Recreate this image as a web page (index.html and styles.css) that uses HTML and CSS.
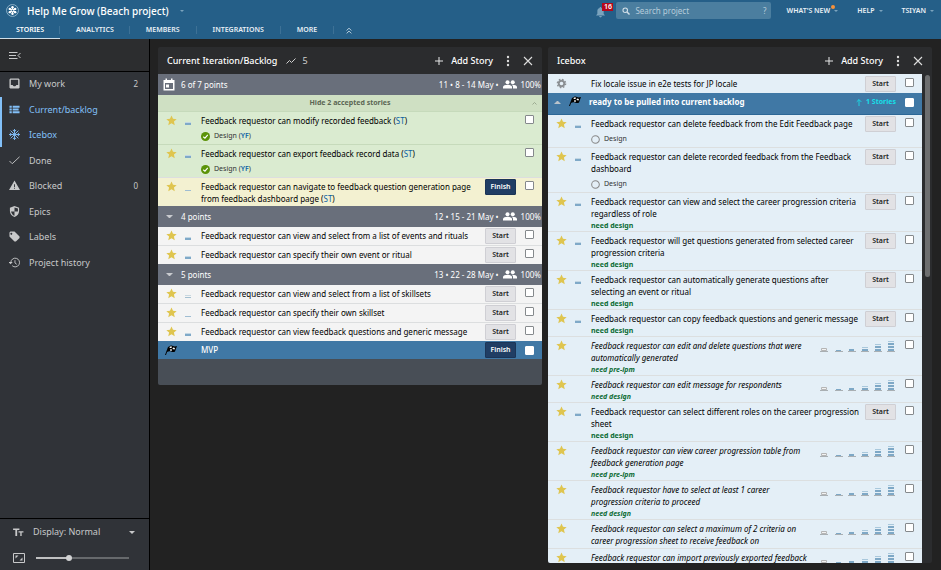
FILE: index.html
```
<!DOCTYPE html>
<html lang="en">
<head>
<meta charset="utf-8">
<title>Help Me Grow (Beach project)</title>
<link rel="stylesheet" href="styles.css">
</head>
<body>
<svg class="defs" aria-hidden="true">
  <symbol id="star" viewBox="0 0 24 24"><path d="M12 1l3.300 7.300 8 .8-6 5.300 1.800 7.900L12 18.200 4.900 22.300l1.800-7.900-6-5.300 8-.8z"/></symbol>
  <symbol id="est1" viewBox="0 0 6 10"><path fill="#c3d7e4" d="M0 6h6v1H0z"/><path fill="#7fa9c8" d="M0 7h6v2H0z"/></symbol>
  <symbol id="est0" viewBox="0 0 6 10"><path fill="#9fbdd2" d="M0 8h6v1H0z"/></symbol>
  <symbol id="est2" viewBox="0 0 6 10"><path fill="#c9d8e0" d="M0 6h6v1H0z"/><path fill="#a3bfd0" d="M0 8h6v1H0z"/></symbol>
  <symbol id="scale" viewBox="0 0 76 13">
    <path fill="#a9afb3" d="M0 11h8v1H0zM15 11h8v1h-8zM28 11h8v1h-8zM41 11h8v1h-8zM54 11h8v1h-8zM67 11h8v1h-8z"/>
    <path fill="#f2f2f2" stroke="#b5b5b5" d="M1.500 8.500h5v2h-5z"/>
    <path fill="#7ea8c6" d="M16 10h5v1h-5zM29 9h5v2h-5zM42 9h6v2h-6zM55 9h6v2h-6zM55 6h6v2h-6zM68 9h6v2h-6zM68 6h6v2h-6zM68 3h6v2h-6z"/>
    <path fill="#a9c8dc" d="M42 7h6v1h-6zM55 4h6v1h-6zM68 1h6v1h-6z"/>
  </symbol>
  <symbol id="flag" viewBox="0 0 24 20"><path fill="#000" d="M0 20L6 4l2-1-6 17zM6 5c4-5 8-5 10-3 2 1 5 1 8 0l-4 11c-2 2-6 1-8 0s-5-1-8 1z"/><path fill="#fff" d="M10 3h4l-1 3H9zM16 5l4 1-1 3-4-1zM11 8l3 1-1 3-3-1z"/></symbol>
  <symbol id="gear" viewBox="0 0 24 24"><circle cx="12" cy="12" r="6" fill="none" stroke="#8b8f93" stroke-width="4"/><circle cx="12" cy="12" r="9" fill="none" stroke="#8b8f93" stroke-width="3" stroke-dasharray="3.500 3.570"/></symbol>
  <symbol id="people" viewBox="0 0 28 18"><g fill="#fff"><circle cx="9" cy="4.500" r="4"/><circle cx="19.500" cy="4.500" r="4"/><path d="M0 17v-3c0-3 5-4.500 9-4.500s9 1.500 9 4.500v3zM20 17v-3c0-2-1-3.200-2.500-4.300 4-.6 10.500 1 10.500 4.300v3z"/></g></symbol>
  <symbol id="plus" viewBox="0 0 10 10"><path fill="none" stroke="#e8e8e8" d="M5 1v8M1 5h8"/></symbol>
  <symbol id="dots" viewBox="0 0 4 12"><g fill="#ddd"><circle cx="2" cy="2" r="1.200"/><circle cx="2" cy="6" r="1.200"/><circle cx="2" cy="10" r="1.200"/></g></symbol>
  <symbol id="close" viewBox="0 0 10 10"><path fill="none" stroke="#ddd" stroke-width="1.100" d="M1 1l8 8M9 1l-8 8"/></symbol>
  <symbol id="done" viewBox="0 0 16 16"><circle cx="8" cy="8" r="8" fill="#5b9308"/><path fill="none" stroke="#fff" stroke-width="2" d="M4 8.500l3 2.500 5-6"/></symbol>
  <symbol id="todo" viewBox="0 0 16 16"><circle cx="8" cy="8" r="6.800" fill="none" stroke="#888" stroke-width="1.800"/></symbol>
</svg>

<header class="topbar">
  <div class="brand">
    <svg class="logo" viewBox="0 0 24 24"><circle cx="12" cy="12" r="11" fill="none" stroke="#9fc0d4" stroke-width="1.500"/><g stroke="#fff" stroke-width="2.600" fill="none"><path d="M12 5v14M6 8.500l12 7M18 8.500l-12 7"/></g><g fill="#fff"><circle cx="12" cy="6" r="2.200"/><circle cx="12" cy="18" r="2.200"/><circle cx="7" cy="9" r="2.200"/><circle cx="17" cy="9" r="2.200"/><circle cx="7" cy="15" r="2.200"/><circle cx="17" cy="15" r="2.200"/></g><circle cx="12" cy="12" r="1.500" fill="#255f88"/></svg>
    <h1>Help Me Grow (Beach project)</h1>
    <span class="caret"></span>
  </div>
  <div class="tools">
    <button class="bell" aria-label="Notifications"><svg viewBox="0 0 20 24"><path fill="#7ba3bd" d="M10 1c1 0 2 1 2 2 4 1 5 4 5 8v5l3 4H0l3-4v-5c0-4 1-7 5-8 0-1 1-2 2-2zM7 21h6c0 4-6 4-6 0z"/></svg><span class="count">16</span></button>
    <label class="search"><svg viewBox="0 0 16 16"><circle cx="6.500" cy="6.500" r="4.500" fill="none" stroke="#d3e0e9" stroke-width="2.200"/><path stroke="#d3e0e9" stroke-width="2.800" d="M10 10l5 5"/></svg><input type="text" placeholder="Search project" aria-label="Search project"><span>?</span></label>
    <a class="menu new" href="#">WHAT'S NEW<i class="dot"></i><span class="caret"></span></a>
    <a class="menu help" href="#">HELP<span class="caret"></span></a>
    <a class="menu" href="#">TSIYAN<span class="caret"></span></a>
  </div>
  <nav class="tabs">
    <a class="on" href="#">STORIES</a><a href="#">ANALYTICS</a><a href="#">MEMBERS</a><a href="#">INTEGRATIONS</a><a href="#">MORE</a>
    <button aria-label="Collapse header"><svg viewBox="0 0 10 12"><path fill="none" stroke="#c5d7e3" stroke-width="1.600" d="M1 6l4-4 4 4M1 11l4-4 4 4"/></svg></button>
  </nav>
</header>

<div class="app">
<aside class="sidebar">
  <div class="fold"><button aria-label="Collapse sidebar"><svg viewBox="0 0 24 16"><path fill="none" stroke="#c8c9ca" stroke-width="2" d="M0 2h17M0 8h14M0 14h17M23 3l-5 5 5 5"/></svg></button></div>
  <ul class="nav">
    <li><a href="#"><svg viewBox="0 0 24 24"><path fill="#c8c9ca" fill-rule="evenodd" d="M3 1h18l2 2v18l-2 2H3l-2-2V3zM4 4v11h4c1 4 7 4 8 0h4V4z"/></svg>My work<span>2</span></a></li>
    <li class="on"><a href="#"><svg viewBox="0 0 24 24"><path fill="#82c0f8" d="M1 4h5v4H1zM8 4h15v4H8zM1 10h5v4H1zM8 10h13v4H8zM1 16h5v4H1zM8 16h15v4H8z"/></svg>Current/backlog</a></li>
    <li class="on"><a href="#"><svg viewBox="0 0 24 24"><path fill="none" stroke="#82c0f8" stroke-width="2" d="M12 0v24M0 12h24M3.500 3.500l17 17M20.500 3.500l-17 17M8.500 2l3.500 4 3.500-4M8.500 22l3.500-4 3.500 4M2 8.500l4 3.500-4 3.500M22 8.500l-4 3.500 4 3.500"/></svg>Icebox</a></li>
    <li><a href="#"><svg viewBox="0 0 24 24"><path fill="none" stroke="#c8c9ca" stroke-width="2" d="M1 13l6 6L23 4"/></svg>Done</a></li>
    <li><a href="#"><svg viewBox="0 0 24 24"><path fill="#c8c9ca" fill-rule="evenodd" d="M12 1l12 21H0zM11 9v6h2V9zM11 17v2h2v-2z"/></svg>Blocked<span>0</span></a></li>
    <li><a href="#"><svg viewBox="0 0 24 24"><path fill="#c8c9ca" fill-rule="evenodd" d="M12 0l10 4v7c0 6-4 11-10 13C6 22 2 17 2 11V4zM12 3v9H4.500c.5 4 3.500 8 7.500 9.500V12h7.500V5.500z"/></svg>Epics</a></li>
    <li><a href="#"><svg viewBox="0 0 24 24"><path fill="#c8c9ca" fill-rule="evenodd" d="M1 3l2-2h9l11 11v3l-8 8h-3L1 12zM5 4a2 2 0 1 0 .1 0z"/></svg>Labels</a></li>
    <li><a href="#"><svg viewBox="0 0 24 24"><path fill="none" stroke="#c8c9ca" stroke-width="2" d="M4 12a9.500 9.500 0 1 1 3 7M13 7v6l4 3"/><path fill="#c8c9ca" d="M-1 11h9l-4.500 5z"/></svg>Project history</a></li>
  </ul>
  <div class="display">
    <button class="density"><svg viewBox="0 0 24 20"><path fill="#c8c9ca" d="M0 1h14v3.500H9V18H5V4.500H0zM12 7h11v3h-4v8h-3v-8h-4z"/></svg>Display: Normal<span class="caret"></span></button>
    <div class="zoom"><svg viewBox="0 0 24 20"><path fill="none" stroke="#c8c9ca" stroke-width="2" d="M1 1h22v18H1z"/><path fill="#c8c9ca" d="M5 5h6l-6 6zM19 15h-6l6-6z"/></svg><input type="range" min="0" max="100" value="34" aria-label="Story size"></div>
  </div>
</aside>

<main class="panels">
<section class="panel backlog">
  <header class="head"><h2>Current Iteration/Backlog</h2><span class="velocity"><svg viewBox="0 0 20 12"><path fill="none" stroke="#d0d0d0" stroke-width="2" d="M1 11l6-6 4 4 8-8"/></svg>5</span>
    <button class="add"><svg><use href="#plus"/></svg>Add Story</button><button class="more" aria-label="Panel menu"><svg><use href="#dots"/></svg></button><button class="close" aria-label="Close panel"><svg><use href="#close"/></svg></button></header>
  <div class="band"><svg class="cal" viewBox="0 0 24 24"><path fill="#fff" fill-rule="evenodd" d="M1 3h4V0h3v3h8V0h3v3h4v21H1zM4 9v12h16V9zM6 12h6v6H6z"/></svg><b>6 of 7 points</b><span>11 • 8 - 14 May •</span><svg class="people"><use href="#people"/></svg><span>100%</span></div>
  <button class="accepted"><span>Hide 2 accepted stories</span><svg viewBox="0 0 10 6"><path fill="none" stroke="#8b9a80" stroke-width="1.500" d="M1 5l4-4 4 4"/></svg></button>
  <article class="row green first"><svg class="star"><use href="#star"/></svg><svg class="est"><use href="#est1"/></svg><div class="text"><p>Feedback requestor can modify recorded feedback (<a href="#">ST</a>)</p><div class="review"><svg><use href="#done"/></svg>Design (<b>YF</b>)</div></div><input type="checkbox" aria-label="Select story"></article>
  <article class="row green"><svg class="star"><use href="#star"/></svg><svg class="est"><use href="#est1"/></svg><div class="text"><p>Feedback requestor can export feedback record data (<a href="#">ST</a>)</p><div class="review"><svg><use href="#done"/></svg>Design (<b>YF</b>)</div></div><input type="checkbox" aria-label="Select story"></article>
  <article class="row yellow"><svg class="star"><use href="#star"/></svg><svg class="est"><use href="#est0"/></svg><div class="text"><p>Feedback requestor can navigate to feedback question generation page from feedback dashboard page (<a href="#">ST</a>)</p></div><button class="act finish">Finish</button><input type="checkbox" aria-label="Select story"></article>
  <div class="band"><i class="tri"></i><b>4 points</b><span>12 • 15 - 21 May •</span><svg class="people"><use href="#people"/></svg><span>100%</span></div>
  <article class="row"><svg class="star"><use href="#star"/></svg><svg class="est"><use href="#est1"/></svg><div class="text"><p>Feedback requestor can view and select from a list of events and rituals</p></div><button class="act">Start</button><input type="checkbox" aria-label="Select story"></article>
  <article class="row"><svg class="star"><use href="#star"/></svg><svg class="est"><use href="#est1"/></svg><div class="text"><p>Feedback requestor can specify their own event or ritual</p></div><button class="act">Start</button><input type="checkbox" aria-label="Select story"></article>
  <div class="band"><i class="tri"></i><b>5 points</b><span>13 • 22 - 28 May •</span><svg class="people"><use href="#people"/></svg><span>100%</span></div>
  <article class="row"><svg class="star"><use href="#star"/></svg><svg class="est"><use href="#est2"/></svg><div class="text"><p>Feedback requestor can view and select from a list of skillsets</p></div><button class="act">Start</button><input type="checkbox" aria-label="Select story"></article>
  <article class="row"><svg class="star"><use href="#star"/></svg><svg class="est"><use href="#est0"/></svg><div class="text"><p>Feedback requestor can specify their own skillset</p></div><button class="act">Start</button><input type="checkbox" aria-label="Select story"></article>
  <article class="row"><svg class="star"><use href="#star"/></svg><svg class="est"><use href="#est1"/></svg><div class="text"><p>Feedback requestor can view feedback questions and generic message</p></div><button class="act">Start</button><input type="checkbox" aria-label="Select story"></article>
  <article class="release mvp"><svg class="flag"><use href="#flag"/></svg><p>MVP</p><button class="act finish">Finish</button><input type="checkbox" aria-label="Select release"></article>
  <div class="foot"></div>
</section>

<section class="panel icebox">
  <header class="head"><h2>Icebox</h2>
    <button class="add"><svg><use href="#plus"/></svg>Add Story</button><button class="more" aria-label="Panel menu"><svg><use href="#dots"/></svg></button><button class="close" aria-label="Close panel"><svg><use href="#close"/></svg></button></header>
  <div class="scroll"><div class="list">
  <article class="row"><svg class="star"><use href="#gear"/></svg><span class="est"></span><div class="text"><p>Fix locale issue in e2e tests for JP locale</p></div><button class="act">Start</button><input type="checkbox" aria-label="Select story"></article>
  <article class="release ready"><i class="tri up"></i><svg class="flag"><use href="#flag"/></svg><p>ready to be pulled into current backlog</p><span class="moved"><svg viewBox="0 0 10 12"><path fill="none" stroke="#17dfe8" stroke-width="1.500" d="M5 12V1M1 5l4-4 4 4"/></svg>1 Stories</span><input type="checkbox" aria-label="Select release"></article>
  <article class="row"><svg class="star"><use href="#star"/></svg><svg class="est"><use href="#est1"/></svg><div class="text"><p>Feedback requestor can delete feedback from the Edit Feedback page</p><div class="review"><svg><use href="#todo"/></svg>Design</div></div><button class="act">Start</button><input type="checkbox" aria-label="Select story"></article>
  <article class="row"><svg class="star"><use href="#star"/></svg><svg class="est"><use href="#est1"/></svg><div class="text"><p>Feedback requestor can delete recorded feedback from the Feedback dashboard</p><div class="review"><svg><use href="#todo"/></svg>Design</div></div><button class="act">Start</button><input type="checkbox" aria-label="Select story"></article>
  <article class="row"><svg class="star"><use href="#star"/></svg><svg class="est"><use href="#est1"/></svg><div class="text"><p>Feedback requestor can view and select the career progression criteria regardless of role</p><a class="tag" href="#">need design</a></div><button class="act">Start</button><input type="checkbox" aria-label="Select story"></article>
  <article class="row"><svg class="star"><use href="#star"/></svg><svg class="est"><use href="#est1"/></svg><div class="text"><p>Feedback requestor will get questions generated from selected career progression criteria</p><a class="tag" href="#">need design</a></div><button class="act">Start</button><input type="checkbox" aria-label="Select story"></article>
  <article class="row"><svg class="star"><use href="#star"/></svg><svg class="est"><use href="#est1"/></svg><div class="text"><p>Feedback requestor can automatically generate questions after selecting an event or ritual</p><a class="tag" href="#">need design</a></div><button class="act">Start</button><input type="checkbox" aria-label="Select story"></article>
  <article class="row"><svg class="star"><use href="#star"/></svg><svg class="est"><use href="#est1"/></svg><div class="text"><p>Feedback requestor can copy feedback questions and generic message</p><a class="tag" href="#">need design</a></div><button class="act">Start</button><input type="checkbox" aria-label="Select story"></article>
  <article class="row raw"><svg class="star"><use href="#star"/></svg><span class="est"></span><div class="text"><p>Feedback requestor can edit and delete questions that were automatically generated</p><a class="tag" href="#">need pre-ipm</a></div><svg class="scale"><use href="#scale"/></svg><input type="checkbox" aria-label="Select story"></article>
  <article class="row raw"><svg class="star"><use href="#star"/></svg><span class="est"></span><div class="text"><p>Feedback requestor can edit message for respondents</p><a class="tag" href="#">need design</a></div><svg class="scale"><use href="#scale"/></svg><input type="checkbox" aria-label="Select story"></article>
  <article class="row"><svg class="star"><use href="#star"/></svg><svg class="est"><use href="#est1"/></svg><div class="text"><p>Feedback requestor can select different roles on the career progression sheet</p><a class="tag" href="#">need design</a></div><button class="act">Start</button><input type="checkbox" aria-label="Select story"></article>
  <article class="row raw"><svg class="star"><use href="#star"/></svg><span class="est"></span><div class="text"><p>Feedback requestor can view career progression table from feedback generation page</p><a class="tag" href="#">need pre-ipm</a></div><svg class="scale"><use href="#scale"/></svg><input type="checkbox" aria-label="Select story"></article>
  <article class="row raw"><svg class="star"><use href="#star"/></svg><span class="est"></span><div class="text"><p>Feedback requestor have to select at least 1 career progression criteria to proceed</p><a class="tag" href="#">need design</a></div><svg class="scale"><use href="#scale"/></svg><input type="checkbox" aria-label="Select story"></article>
  <article class="row raw"><svg class="star"><use href="#star"/></svg><span class="est"></span><div class="text"><p>Feedback requestor can select a maximum of 2 criteria on career progression sheet to receive feedback on</p></div><svg class="scale"><use href="#scale"/></svg><input type="checkbox" aria-label="Select story"></article>
  <article class="row raw"><svg class="star"><use href="#star"/></svg><span class="est"></span><div class="text"><p>Feedback requestor can import previously exported feedback</p></div><svg class="scale"><use href="#scale"/></svg><input type="checkbox" aria-label="Select story"></article>
  </div><div class="thumb"></div></div>
</section>
</main>
</div>
</body>
</html>
```
FILE: styles.css
```
* { box-sizing: border-box; }
body {
  margin: 0;
  height: 100vh;
  display: flex;
  flex-direction: column;
  overflow: hidden;
  background: #222;
  color: #000;
  font: 8px/12px "Noto Sans", "Open Sans", sans-serif;
}
h1, h2, p, ul { margin: 0; padding: 0; font-size: inherit; }
ul { list-style: none; }
a { text-decoration: none; color: inherit; }
button { border: 0; padding: 0; background: none; font: inherit; color: inherit; display: flex; align-items: center; }
svg { display: block; flex: none; }
.defs { position: absolute; width: 0; height: 0; }
.caret { border: 3px solid transparent; border-top-color: #7ba3bd; border-bottom: 0; flex: none; }

/* Top bar */
.topbar {
  flex: none;
  display: grid;
  grid-template-columns: 1fr auto;
  grid-template-rows: 21px 18px;
  background: #255f88;
  color: #e9f0f5;
}
.brand { display: flex; align-items: center; padding-left: 6px; }
.logo { width: 13px; height: 13px; }
.brand h1 { font-size: 10px; font-weight: 500; color: #fff; margin: 0 11px 0 8px; }
.brand .caret { border-width: 2px; border-bottom: 0; }
.tools { display: flex; align-items: center; padding-right: 7px; font-size: 7px; font-weight: 600; }
.bell { position: relative; width: 20px; height: 19px; align-items: flex-end; }
.bell svg { width: 9px; height: 12px; margin-bottom: 2px; }
.count { position: absolute; left: 6px; top: 2px; width: 11px; line-height: 8px; background: #b5081b; color: #fff; text-align: center; }
.search { display: flex; align-items: center; width: 155px; height: 17px; padding: 0 5px 0 6px; border-radius: 2px; background: #4b7e9f; font-size: 8px; font-weight: 400; color: #b7cddb; }
.search svg { width: 8px; height: 8px; }
.search input { flex: 1; min-width: 0; border: 0; padding: 0 5px; background: none; font: inherit; color: #fff; outline: 0; }
.search input::placeholder { color: #b7cddb; opacity: 1; }
.menu { position: relative; display: flex; align-items: center; gap: 4px; margin-left: 19px; }
.menu.new { margin-left: 15px; }
.dot { position: absolute; right: 3px; top: 0; width: 4px; height: 4px; border-radius: 50%; background: #f7923a; }
.menu .caret { border-width: 2px; border-bottom: 0; }
.tabs { grid-column: 1 / -1; display: flex; font-size: 7px; font-weight: 600; line-height: 18px; }
.tabs a { padding: 0 16px; background: linear-gradient(#3d7196, #3d7196) right 5px / 1px 8px no-repeat; }
.tabs a:nth-child(n+3) { padding: 0 17px 0 16px; }
.tabs a.on { color: #fff; border-bottom: 1px solid #cfdfe9; }
.tabs button { padding-left: 12px; }
.tabs svg { width: 6px; height: 7px; }

/* Sidebar */
.app { flex: 1; min-height: 0; display: flex; }
.sidebar { flex: none; width: 150px; display: flex; flex-direction: column; border-right: 1px solid #000; background: #303338; color: #c8c9ca; font-size: 9px; }
.fold { height: 33px; padding: 11px 9px; background: #2c2d2f; border-bottom: 1px solid #000; }
.fold svg { width: 12px; height: 11px; }
.nav { margin-top: -1px; }
.nav li:nth-child(even) { margin-top: 1px; }
.nav a { display: flex; align-items: center; height: 25px; padding: 0 11px 0 7px; border-left: 2px solid transparent; }
.nav .on a { border-color: #82c0f8; color: #82c0f8; }
.nav svg { width: 11px; height: 11px; margin-right: 9px; }
.nav span { margin-left: auto; font-size: 8px; }
.display { margin-top: auto; border-top: 1px solid #000; }
.density { width: 100%; height: 26px; padding: 0 14px 0 13px; }
.density svg { width: 11px; height: 9px; margin-right: 9px; }
.density .caret { margin-left: auto; border-top-color: #c8c9ca; }
.zoom { display: flex; align-items: center; gap: 11px; height: 25px; padding: 0 20px 0 13px; }
.zoom svg { width: 12px; height: 10px; }
.zoom input { flex: 1; min-width: 0; height: 10px; margin: 0; appearance: none; background: linear-gradient(90deg, #c0c1c2 34%, #66696c 34%) center / 100% 2px no-repeat; }
.zoom input::-webkit-slider-thumb { appearance: none; width: 6px; height: 6px; border-radius: 50%; background: #d2d3d4; }

/* Panels */
.panels { flex: 1; min-width: 0; display: flex; align-items: flex-start; gap: 6px; padding: 8px 9px 7px 8px; }
.panel { flex: 1; min-width: 0; border-radius: 2px; overflow: hidden; background: #2b2c2e; }
.icebox { align-self: stretch; display: flex; flex-direction: column; }
.head { flex: none; display: flex; align-items: center; height: 27px; padding: 0 9px; color: #fff; font-size: 9px; }
.head h2 { font-weight: 500; }
.velocity { display: flex; align-items: center; gap: 6px; margin-left: 9px; color: #d0d0d0; }
.velocity svg { width: 10px; height: 6px; }
.add { margin-left: auto; gap: 7px; font-weight: 500; }
.add svg, .close svg { width: 10px; height: 10px; }
.more { margin: 0 13px; }
.more svg { width: 4px; height: 12px; }

.band { display: flex; align-items: center; height: 21px; padding-right: 1px; background: #696f7b; color: #fff; }
.band b { flex: 1; font-weight: 400; }
.band .cal { width: 12px; height: 13px; margin: 0 6px 0 5px; }
.band .people { width: 14px; height: 9px; margin: 0 4px; }
.tri { width: 7px; margin: 0 8px; border: 3px solid transparent; border-top: 3px solid #c9cbcf; border-bottom: 0; }
.tri.up { margin: 0 8px 0 6px; border-top: 0; border-bottom: 3px solid #b9c3cb; }

.accepted { width: 100%; height: 16px; padding: 0 5px 0 10px; background: radial-gradient(#b4c9a6 30%, #cfe0c3 40%) 0 0 / 2px 2px; color: #5b6654; font-size: 7px; font-weight: 700; }
.accepted span { flex: 1; text-align: center; }
.accepted svg { width: 5px; height: 3px; }

.row { display: flex; align-items: flex-start; min-height: 18px; padding: 3px 8px 1px; background: #f4f4f4; }
.row + .row, .row.first { box-sizing: content-box; border-top: 1px solid #dcdedf; min-height: 14px; }
.row.green { background: #daebd0; border-color: #c6dabb; }
.row.yellow { background: #f3f1d1; }
.icebox .row { background: #e4eff7; border-color: #dcdfe0; }
.star { width: 11px; height: 11px; fill: #dfc54f; }
.est { width: 6px; height: 10px; margin: 1px 10px 0 8px; flex: none; }
.text { flex: 1; min-width: 0; padding-right: 2px; }
.text p a { color: #0a62a5; }
.review { display: flex; align-items: center; height: 16px; padding-top: 2px; font-size: 7px; color: #333; }
.review svg { width: 9px; height: 9px; margin-right: 4px; }
.review b { color: #0a62a5; font-weight: 600; }
.tag { display: block; font-size: 7px; line-height: 12px; margin-bottom: -2px; font-weight: 700; color: #0b6b33; }
.raw .text { font-style: italic; padding-right: 8px; }
.scale { width: 76px; height: 13px; }
.act { flex: none; justify-content: center; width: 31px; height: 16px; margin: -2px 0; border: 1px solid #cfcfd4; border-radius: 1px; background: #e2e2e5; font-size: 7px; font-weight: 600; color: #222; }
.act.finish { background: #203e64; border-color: #1b3557; color: #fff; }
input[type="checkbox"] { flex: none; appearance: none; width: 9px; height: 9px; margin: 0 0 0 9px; border: 1px solid #85898c; border-radius: 1px; background: #fff; }

.release { display: flex; align-items: center; background: #4078a5; color: #fff; font-weight: 500; }
.release p { flex: 1; }
.release .flag { width: 12px; height: 10px; }
.release input[type="checkbox"] { border-color: #fff; }
.mvp { height: 18px; padding: 0 8px 0 7px; }
.mvp .flag { margin-right: 24px; }
.ready { height: 22px; padding-right: 8px; padding-bottom: 3px; font-weight: 700; border-bottom: 1px solid #2c6796; }
.ready .flag { margin: 0 8px 2px 0; }
.moved { display: flex; align-items: center; gap: 4px; color: #17dfe8; font-size: 7px; }
.moved svg { width: 6px; height: 7px; }
.foot { height: 26px; background: #484e56; }

.scroll { flex: 1; min-height: 0; display: flex; gap: 3px; padding-right: 2px; overflow: hidden; }
.list { flex: 1; min-width: 0; }
.list > .row:first-child { min-height: 19px; padding-top: 4px; }
.thumb { flex: none; width: 5px; height: 202px; margin-top: 1px; border-radius: 3px; background: #6d6e6f; }
```
